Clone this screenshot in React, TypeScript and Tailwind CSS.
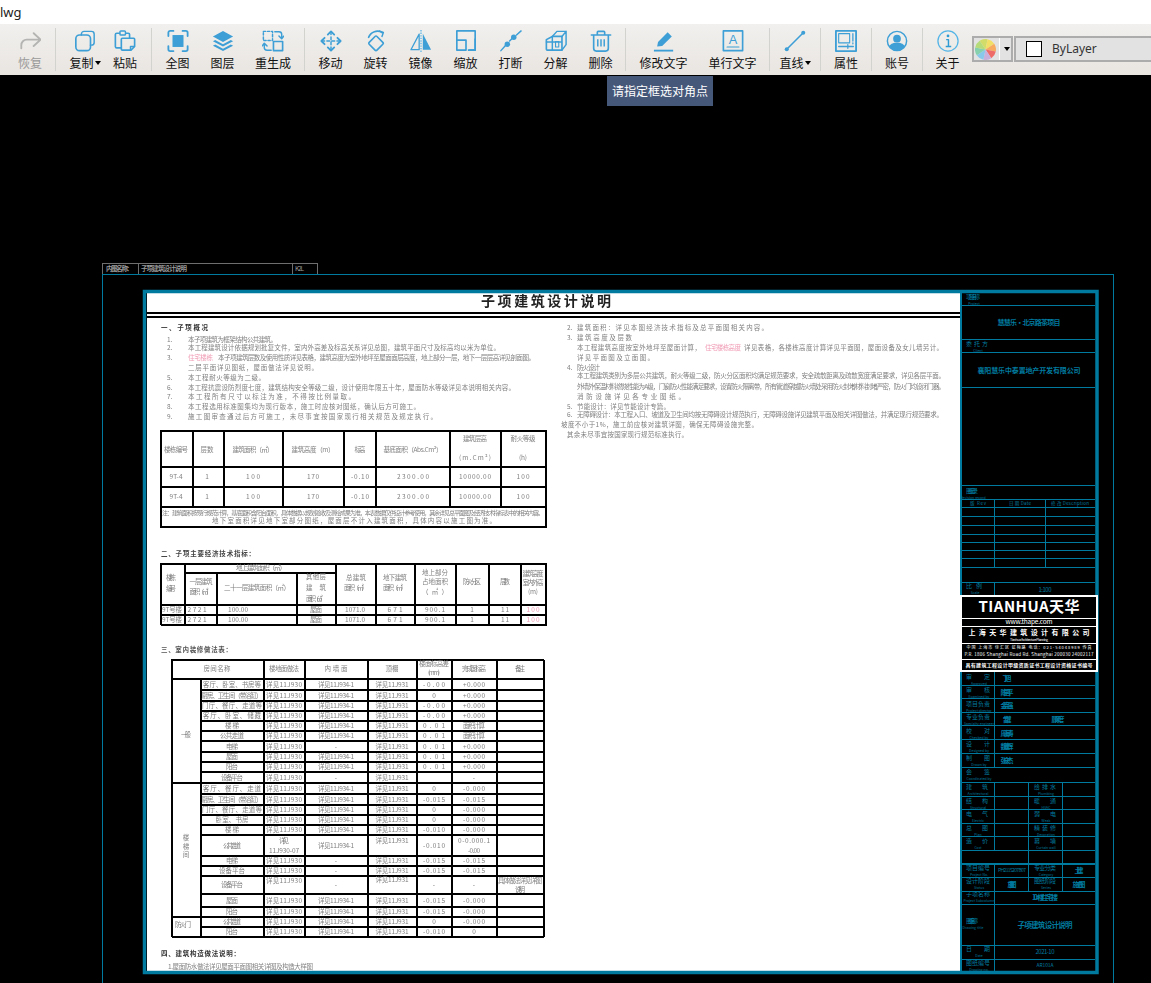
import React from "react";

const B = "#3d9fd6";

function Ic({ children, w = 24 }: { children: React.ReactNode; w?: number }) {
  return (
    <svg width={22} height={22} viewBox={`0 0 ${w} 24`} fill="none" stroke={B} strokeWidth={1.6} strokeLinecap="round" strokeLinejoin="round">
      {children}
    </svg>
  );
}

const icons: Record<string, React.ReactNode> = {
  redo: (
    <Ic><path d="M2.5 20v-3.500a6 6 0 0 1 6-6H23M16 3.500l7.500 7-7.500 7" stroke="#b4b4b2" strokeWidth={2} /></Ic>
  ),
  copy: (
    <Ic><path d="M8 5.500V4.500a3 3 0 0 1 3-3h8a3 3 0 0 1 3 3v9a3 3 0 0 1-3 3h-1" /><rect x="2" y="5.500" width="16" height="17" rx="4" strokeWidth={1.8} /></Ic>
  ),
  paste: (
    <Ic><path d="M6 3.500H3a1.500 1.500 0 0 0-1.500 1.500v13A1.500 1.500 0 0 0 3 19.500h5M17 9V5a1.500 1.500 0 0 0-1.500-1.500H13" strokeWidth={1.8} /><rect x="6.500" y="1" width="6" height="4.500" rx="1" /><path d="M9 9h12.500a1 1 0 0 1 1 1v8l-4 4H9a1 1 0 0 1-1-1V10a1 1 0 0 1 1-1z" strokeWidth={1.8} /><path d="M22 18h-4v4" /></Ic>
  ),
  fit: (
    <Ic><path d="M1.500 6.500V3a2 2 0 0 1 2-2h3.500M17 1h3.500a2 2 0 0 1 2 2v3.500M22.500 17.500V21a2 2 0 0 1-2 2H17M7 23H3.500a2 2 0 0 1-2-2v-3.500" strokeWidth={2} /><rect x="6" y="5.500" width="12" height="13" fill={B} stroke="none" /></Ic>
  ),
  layers: (
    <Ic>
      <path d="M12 1L23 7l-11 6L1 7z" fill={B} stroke="none" />
      <path d="M3.500 10.800L12 15.500l8.500-4.700L23 12.200 12 18 1 12.200z" fill={B} stroke="none" />
      <path d="M3.500 15.800L12 20.500l8.500-4.700L23 17.200 12 23 1 17.200z" fill={B} stroke="none" />
    </Ic>
  ),
  regen: (
    <Ic w={24}>
      <rect x="1.500" y="1.500" width="10" height="10" strokeDasharray="2.500 2" />
      <rect x="12.500" y="12.500" width="10" height="10" strokeWidth={1.8} />
      <path d="M14 2h4.500a3 3 0 0 1 3 3v4M18.500 6.500l3 3 2.500-3M10 22H5.500a3 3 0 0 1-3-3v-4M0 17.500l2.500-3 3 3" />
    </Ic>
  ),
  move: (
    <Ic>
      <path d="M12 2v20M2 12h20" strokeDasharray="3 2.500" />
      <path d="M8.500 5L12 1.500 15.500 5M8.500 19l3.500 3.500 3.500-3.500M5 8.500L1.500 12 5 15.500M19 8.500l3.500 3.500-3.500 3.500" strokeWidth={2} />
    </Ic>
  ),
  rotate: (
    <Ic>
      <rect x="6" y="8.500" width="12" height="12" rx="1.500" transform="rotate(45 12 14.500)" strokeWidth={1.8} />
      <path d="M4 8a10 10 0 0 1 15-5" strokeWidth={1.8} />
      <path d="M15.500 1l4.500 1.700-1.500 4.300" strokeWidth={1.6} />
    </Ic>
  ),
  mirror: (
    <Ic>
      <path d="M10 4.500v17H1z" strokeWidth={1.4} />
      <path d="M14 4v17.500h9z" fill={B} stroke="none" />
      <path d="M12 0v24" strokeDasharray="1.500 1.300" stroke="#88c6e8" strokeWidth={2} strokeLinecap="butt" />
    </Ic>
  ),
  scale: (
    <Ic>
      <path d="M2 11V1h20v21H14" strokeWidth={1.8} strokeLinecap="butt" />
      <rect x="2" y="11" width="10" height="11" strokeWidth={1.8} />
      <path d="M16 22h6V10" strokeWidth={1.8} />
    </Ic>
  ),
  break: (
    <Ic>
      <path d="M23 1l-5 4.500M13.500 9l-3 3M6 17l-5 5.500" strokeWidth={1.6} />
      <circle cx="15" cy="8" r="3" fill={B} stroke="none" />
      <circle cx="8" cy="15.500" r="3" fill={B} stroke="none" />
    </Ic>
  ),
  explode: (
    <Ic>
      <path d="M1.500 10.500L8 7h10.500v15H2.500a1 1 0 0 1-1-1z" strokeWidth={1.8} />
      <path d="M8 7l5-5.500h10V16l-4.500 6M18.500 7L23 1.500M8 7v15M1.500 13H18" strokeWidth={1.6} />
      <path d="M11.500 12.500h3.500v6h-3.500z" strokeWidth={1.2} />
    </Ic>
  ),
  trash: (
    <Ic>
      <path d="M1.500 5.500h21M8 5V2.500a1 1 0 0 1 1-1h6a1 1 0 0 1 1 1V5" strokeWidth={1.8} />
      <path d="M4 6v14a3 3 0 0 0 3 3h10a3 3 0 0 0 3-3V6" strokeWidth={1.8} />
      <path d="M8.500 10v8M12 10v8M15.500 10v8" strokeWidth={1.6} strokeLinecap="butt" />
    </Ic>
  ),
  pencil: (
    <Ic>
      <path d="M4.500 18l1-5L16 2.500 20.500 7 10 17.500z" fill={B} stroke="none" />
      <path d="M1 22.500h21" strokeWidth={2} strokeLinecap="butt" />
    </Ic>
  ),
  text: (
    <Ic>
      <rect x="1.500" y="1" width="21" height="21.500" strokeWidth={1.8} />
      <text x="12" y="15" textAnchor="middle" fontSize="14" fill={B} stroke="none" className="font-['Liberation_Sans',sans-serif]">A</text>
      <path d="M5.500 18.500h13" strokeWidth={1.2} />
    </Ic>
  ),
  line: (
    <Ic>
      <path d="M3 21L21 3" strokeWidth={1.8} />
      <circle cx="3" cy="21" r="2.200" fill={B} stroke="none" />
      <circle cx="21" cy="3" r="2.200" fill={B} stroke="none" />
    </Ic>
  ),
  props: (
    <Ic>
      <rect x="1" y="1" width="22" height="22" strokeWidth={2} strokeLinecap="butt" />
      <rect x="4" y="4" width="12" height="10" strokeWidth={1.2} />
      <path d="M19.500 4v8M4 18h16M19.500 14v1M14 16v4" strokeWidth={1.4} />
    </Ic>
  ),
  user: (
    <Ic>
      <circle cx="12" cy="12" r="10.500" strokeWidth={1.6} />
      <circle cx="12" cy="9.500" r="4.200" fill={B} stroke="none" />
      <path d="M3.500 18c2-3.500 5-4 8.500-4s6.500.5 8.500 4A10.500 10.500 0 0 1 12 22.500 10.500 10.500 0 0 1 3.500 18z" fill={B} stroke="none" />
    </Ic>
  ),
  info: (
    <Ic>
      <circle cx="12" cy="12" r="11" stroke="#55b5e6" strokeWidth={1.4} />
      <circle cx="12" cy="6.500" r="1.500" fill="#2f9bd3" stroke="none" />
      <path d="M10 10.500h2.500v7M9.500 18h6" stroke="#2f9bd3" strokeWidth={1.6} strokeLinecap="butt" />
    </Ic>
  ),
};

function Tool({ icon, label, w, dim, caret }: { icon: string; label: string; w: string; dim?: boolean; caret?: boolean }) {
  return (
    <div className={`${w} flex flex-col items-center shrink-0`}>
      <div className="h-[22px] flex items-center justify-center mt-[6px]">{icons[icon]}</div>
      <div className={`mt-[2px] h-[18px] flex items-center text-[12px] leading-[18px] whitespace-nowrap ${dim ? "text-[#9a9a9a]" : "text-[#111]"}`}>
        {label}
        {caret && <span className="ml-px w-0 h-0 border-x-[3.5px] border-x-transparent border-t-[4px] border-t-black" />}
      </div>
    </div>
  );
}

function Sep() {
  return <div className="w-px h-[43px] mt-[4px] bg-[#d2d2cf] shrink-0" />;
}

function Pie() {
  const cols = ["#d2dc68", "#f2df66", "#f7ab5e", "#ee6a68", "#c8afdc", "#88c8ea", "#86d0ae", "#b5dc78"];
  const r = 10.5;
  const c = 10.5;
  return (
    <svg width="21" height="21" viewBox="0 0 21 21">
      {cols.map((col, i) => {
        const a0 = ((i - 1) * Math.PI) / 4 - Math.PI / 2 + 0.2;
        const a1 = (i * Math.PI) / 4 - Math.PI / 2 + 0.2;
        return (
          <path
            key={i}
            fill={col}
            d={`M${c} ${c}L${c + r * Math.cos(a0)} ${c + r * Math.sin(a0)}A${r} ${r} 0 0 1 ${c + r * Math.cos(a1)} ${c + r * Math.sin(a1)}Z`}
          />
        );
      })}
    </svg>
  );
}

const TEAL = "#007a9f";
const INK = "#808080";

function T({ x, y, w, s, fs = 6.5, fill = INK, anchor = "start", bold, soft }: { x: number; y: number; w?: number; s: string; fs?: number; fill?: string; anchor?: "start" | "middle"; bold?: boolean; soft?: boolean }) {
  const isSoft = soft ?? (fill !== TEAL && fill !== "#fff");
  return (
    <text
      x={x}
      y={y + fs * 0.36}
      fontSize={fs}
      fill={fill}
      textAnchor={anchor}
      fontWeight={bold ? 700 : 400}
      textLength={w}
      lengthAdjust={w ? "spacing" : undefined}
      className={isSoft ? "blur-[0.35px]" : undefined}
    >
      {s}
    </text>
  );
}
const C = (x: number, y: number, w: number, s: string, fill?: string) => <T key={`${x}-${y}-${s}`} x={x} y={y} w={w} s={s} anchor="middle" fill={fill} />;

function Lines({ h = [], v = [], color = "#000", sw = 2 }: { h?: number[][]; v?: number[][]; color?: string; sw?: number }) {
  return (
    <g stroke={color} strokeWidth={sw} shapeRendering="crispEdges">
      {h.map(([y, a, b], i) => <line key={`h${i}`} x1={a} x2={b} y1={y} y2={y} />)}
      {v.map(([x, a, b], i) => <line key={`v${i}`} x1={x} x2={x} y1={a} y2={b} />)}
    </g>
  );
}

const notes: [number, number, number, string][] = [
  [340, 188, 277, "本子项建筑为框架结构公共建筑。"],
  [348, 188, 500, "本工程建筑设计依据规划批复文件，室内外高差及标高关系详见总图，建筑平面尺寸及标高均以米为单位。"],
  [368, 188, 318, "二层平面详见图纸，屋面做法详见说明。"],
  [378, 188, 265, "本工程耐火等级为二级。"],
  [388, 188, 515, "本工程抗震设防烈度七度，建筑结构安全等级二级，设计使用年限五十年，屋面防水等级详见本说明相关内容。"],
  [397, 188, 355, "本工程所有尺寸以标注为准，不得按比例量取。"],
  [407, 188, 420, "本工程选用标准图集均为现行版本，施工时应核对图纸，确认后方可施工。"],
  [417, 188, 437, "施工图审查通过后方可施工，未尽事宜按国家现行相关规范及规定执行。"],
];

const rightNotes: [number, number, number, string, string?][] = [
  [328, 577, 768, "建筑面积：详见本图经济技术指标及总平面图相关内容。"],
  [338, 577, 632, "建筑高度及层数"],
  [358, 577, 654, "详见平面图及立面图。"],
  [368, 577, 600, "防火设计"],
  [376, 577, 945, "本工程建筑类别为多层公共建筑，耐火等级二级，防火分区面积均满足规范要求，安全疏散距离及疏散宽度满足要求，详见各层平面。"],
  [387, 577, 945, "外墙外保温材料燃烧性能为A级，门窗防火性能满足要求，设置防火隔离带，所有管道穿越防火墙处采用防火封堵材料封堵严密，防火门均设闭门器。"],
  [397, 577, 685, "消防设施详见各专业图纸。"],
  [407, 577, 670, "节能设计：详见节能设计专篇。"],
  [415, 577, 943, "无障碍设计：本工程入口、坡道及卫生间均按无障碍设计规范执行，无障碍设施详见建筑平面及相关详图做法，并满足现行规范要求。"],
  [425, 561, 758, "坡度不小于1%，施工前应核对建筑详图，确保无障碍设施完整。"],
  [435, 567, 688, "其余未尽事宜按国家现行规范标准执行。"],
];

const t3Y = [679, 690, 701, 711, 721, 731, 741, 752, 762, 772, 783, 794, 805, 815, 825, 835, 856, 866, 876, 894, 907, 917, 927, 937];
const t3Rows: [string, number, string, string, string][] = [
  ["客厅、卧室、书房等", 58, "1", "-0.00", "+0.000"],
  ["厨房、卫生间（带浴缸）", 61, "1", "0", "+0.000"],
  ["门厅、餐厅、走道等", 60, "1", "-0.00", "+0.000"],
  ["客厅、卧室、储藏", 58, "1", "-0.00", "+0.000"],
  ["楼梯", 14, "1", "0.01", "面积计算"],
  ["公共走道", 24, "1", "0.01", "面积计算"],
  ["电梯", 12, "-", "0.01", "+0.000"],
  ["屋面", 12, "1", "0.01", "+0.000"],
  ["阳台", 12, "1", "0.01", "+0.000"],
  ["设备平台", 22, "-", "", "-"],
  ["客厅、餐厅、走道", 58, "1", "0", "-0.000"],
  ["厨房、卫生间（带浴缸）", 61, "1", "-0.015", "-0.015"],
  ["门厅、餐厅、走道等", 60, "1", "0", "-0.000"],
  ["卧室、书房", 33, "1", "0", "-0.000"],
  ["楼梯", 14, "1", "-0.010", "-0.000"],
  ["公共走道", 18, "1", "-0.010", "-0.015"],
  ["电梯", 12, "-", "-0.015", "-0.015"],
  ["设备平台", 26, "-", "-0.015", "-0.015"],
  ["设备平台", 22, "-", "-", "-"],
  ["屋面", 12, "1", "-0.015", "-0.000"],
  ["阳台", 12, "1", "-0.015", "-0.000"],
  ["公共走道", 18, "1", "0", "-0.000"],
  ["阳台", 12, "1", "-0.010", "0"],
];

function Page() {
  return (
    <g>
      <rect x="147" y="293" width="814" height="679" fill="#fff" />
      <text x="546" y="306" fontSize="14" fontWeight={700} textAnchor="middle" fill="#222" textLength={130} lengthAdjust="spacing" className="blur-[0.35px]">子项建筑设计说明</text>
      <Lines h={[[313, 147, 960], [317, 147, 960]]} sw={2} />

      <T x={161} y={328} w={47} s="一、子项概况" fill="#333" bold />
      {notes.map(([y, a, b, s], i) => (
        <g key={i}>
          {i !== 2 && <T x={167} y={y} s={`${i < 2 ? i + 1 : i + 2}.`} />}
          <T x={a} y={y} w={b - a} s={s} />
        </g>
      ))}
      <T x={167} y={358} s="3." />
      <T x={188} y={358} w={25} s="住宅楼栋" fill="#f09ab4" />
      <T x={218} y={358} w={317} s="本子项建筑层数及使用性质详见表格，建筑高度为室外地坪至屋面面层高度，地上部分一层，地下一层层高详见剖面图。" />

      {/* table 1 */}
      <Lines
        h={[[431, 160, 547], [467, 160, 547], [487, 160, 547], [507, 160, 547], [527, 160, 547]]}
        v={[[161, 431, 527], [193, 431, 507], [224, 431, 507], [283, 431, 507], [344, 431, 507], [376, 431, 507], [450, 431, 507], [501, 431, 507], [546, 431, 527]]}
      />
      {C(176, 450, 24, "楼栋编号")}
      {C(207, 450, 13, "层数")}
      {C(253, 450, 41, "建筑面积（㎡）")}
      {C(313, 450, 43, "建筑高度（m）")}
      {C(360, 450, 11, "标高")}
      {C(413, 450, 59, "基底面积（Abs.Cm²）")}
      {C(475, 439, 24, "建筑层高")}
      {C(475, 458, 32, "(m.Cm²)")}
      {C(523, 439, 25, "耐火等级")}
      {C(523, 458, 8, "(h)")}
      {[477, 497].map((y) => (
        <g key={y}>
          {C(176, y, 13, "9T-4")}
          {C(207, y, 3, "1")}
          {C(253, y, 14, "100")}
          {C(313, y, 12, "170")}
          {C(360, y, 18, "-0.10")}
          {C(413, y, 32, "2300.00")}
          {C(475, y, 32, "10000.00")}
          {C(523, y, 13, "100")}
        </g>
      ))}
      <T x={162} y={513} w={382} s="注：建筑面积按现行规范计算，基底面积含阳台面积，具体数据以规划验收及测绘成果为准，本表数据仅供设计参考使用，其余详见总平面图及经济技术指标表中的相关内容。" fs={6} />
      <T x={212} y={521} w={284} s="地下室面积详见地下室部分图纸，屋面层不计入建筑面积，具体内容以施工图为准。" />

      {/* table 2 */}
      <T x={161} y={554} w={94} s="二、子项主要经济技术指标：" fill="#444" bold />
      <Lines
        h={[[564, 160, 547], [573, 185, 336], [605, 160, 547], [615, 160, 547], [625, 161, 547]]}
        v={[[161, 564, 625], [185, 564, 625], [217, 573, 625], [297, 573, 625], [336, 564, 625], [376, 564, 625], [415, 564, 625], [456, 564, 625], [489, 564, 625], [521, 564, 625], [546, 564, 625]]}
      />
      {C(171, 578, 10, "楼栋")}
      {C(171, 589, 10, "编号")}
      {C(261, 568, 50, "地上建筑面积（㎡）")}
      {C(201, 582, 23, "一层建筑")}
      {C(201, 592, 23, "面积（㎡）")}
      {C(257, 588, 66, "二十一层建筑面积（㎡）")}
      {C(316, 577, 20, "其他层")}
      {C(316, 588, 20, "建筑")}
      {C(316, 599, 20, "面积（㎡）")}
      {C(356, 578, 20, "总建筑")}
      {C(356, 588, 24, "面积（㎡）")}
      {C(395, 578, 24, "地下建筑")}
      {C(395, 588, 24, "面积（㎡）")}
      {C(435, 573, 26, "地上部分")}
      {C(435, 582, 26, "占地面积")}
      {C(435, 592, 26, "（㎡）")}
      {C(472, 582, 18, "防火分区")}
      {C(505, 582, 10, "层数")}
      {C(533, 574, 21, "建筑高度")}
      {C(533, 583, 21, "室内外高")}
      {C(533, 592, 10, "(m)")}
      {[610, 620].map((y) => (
        <g key={y}>
          {C(172, y, 20, "9T号楼")}
          {C(197, y, 19, "2721")}
          {C(238, y, 20, "100.00")}
          {C(316, y, 12, "屋面")}
          {C(355, y, 20, "1071.0")}
          {C(395, y, 15, "671")}
          {C(435, y, 20, "900.1")}
          {C(472, y, 3, "1")}
          {C(505, y, 8, "11")}
          {C(533, y, 13, "100", "#f09ab4")}
        </g>
      ))}

      {/* table 3 */}
      <T x={161} y={650} w={71} s="三、室内装修做法表：" fill="#555" bold />
      <Lines
        h={[[660, 171, 544], [679, 171, 544], [783, 171, 544], [917, 171, 544], [937, 172, 544], ...t3Y.filter((y) => ![679, 783, 917, 937].includes(y)).map((y) => [y, 201, 544])]}
        v={[[172, 660, 937], [201, 679, 937], [264, 660, 937], [305, 660, 937], [368, 660, 937], [417, 660, 937], [452, 660, 937], [497, 660, 937], [544, 660, 937]]}
      />
      {C(217, 669, 27, "房间名称")}
      {C(284, 669, 30, "楼地面做法")}
      {C(336, 669, 23, "内墙面")}
      {C(392, 669, 13, "顶棚")}
      {C(434, 664, 30, "楼面标高差")}
      {C(434, 673, 12, "(mm)")}
      {C(474, 669, 24, "完成面标高")}
      {C(520, 669, 10, "备注")}
      {C(186, 735, 10, "一般")}
      {C(186, 838, 6, "楼")}
      {C(186, 847, 6, "梯")}
      {C(186, 855, 6, "间")}
      {C(183, 925, 16, "防火门")}
      {t3Rows.map(([name, w, wall, d1, d2], i) => {
        const y = (t3Y[i] + t3Y[i + 1]) / 2;
        const tall = i === 15;
        const note = i === 18;
        return (
          <g key={i}>
            {C(232, y, w, name)}
            {tall ? (
              <>
                {C(284, y - 5, 10, "详见")}
                {C(284, y + 5, 30, "11J930-07")}
              </>
            ) : (
              C(284, note ? y - 4 : y, 36, "详见11J930")
            )}
            {C(336, y, wall === "-" ? 3 : 36, wall === "-" ? "-" : "详见11J934-1")}
            {C(392, tall || note ? y - 5 : y, 33, "详见11J931")}
            {d1 && C(434, y, d1 === "-" || d1 === "0" || d1 === "1" ? 3 : 22, d1)}
            {tall ? (
              <>
                {C(474, y - 5, 32, "0-0.000.1")}
                {C(474, y + 5, 12, "-0.00")}
              </>
            ) : (
              C(474, y, d2 === "-" || d2 === "0" ? 3 : 22, d2)
            )}
            {note && (
              <>
                {C(520, y - 4, 44, "具体做法详见详图")}
                {C(520, y + 5, 10, "说明")}
              </>
            )}
          </g>
        );
      })}

      <T x={161} y={954} w={79} s="四、建筑构造做法说明：" fill="#333" bold />
      <T x={168} y={967} w={145} s="1.屋面防水做法详见屋面平面图相关详图及构造大样图" />

      {rightNotes.map(([y, a, b, s], i) => (
        <T key={i} x={a} y={y} w={b - a} s={s} />
      ))}
      <T x={567} y={328} s="2." />
      <T x={567} y={338} s="3." />
      <T x={567} y={368} s="4." />
      <T x={567} y={407} s="5." />
      <T x={567} y={415} s="6." />
      <T x={577} y={348} w={124} s="本工程建筑高度按室外地坪至屋面计算，" />
      <T x={705} y={348} w={36} s="住宅楼栋高度" fill="#f09ab4" />
      <T x={744} y={348} w={199} s="详见表格，各楼栋高度计算详见平面图，屋面设备及女儿墙另计。" />
    </g>
  );
}

const TL = (x: number, y: number, w: number, s: string, fs = 7, bold = true) => (
  <T key={`${x}-${y}-${s}`} x={x} y={y} w={w} s={s} fs={fs} fill={TEAL} anchor="middle" bold={bold} />
);

function Lab({ y, s, en, x2 = 992, x1 = 966 }: { y: number; s: string; en: string; x1?: number; x2?: number }) {
  return (
    <g>
      <T x={x1} y={y} w={x2 - x1 - 2} s={s} fs={6} fill={TEAL} />
      <T x={(x1 + x2) / 2} y={y + 6.500} s={en} fs={3.500} fill={TEAL} anchor="middle" />
    </g>
  );
}

function TitleBlock() {
  return (
    <g>
      <Lines
        color={TEAL}
        sw={1}
        h={[
          ...[305, 339, 352, 387, 485, 499, 507, 516, 525, 534, 542, 550, 558, 567, 582].map((y) => [y + 0.5, 962, 1095]),
          ...[685, 698, 712, 725, 739, 753, 767, 782, 796, 809, 823, 836, 850, 877, 891, 904, 945, 959].map((y) => [y + 0.5, 962, 1095]),
        ]}
        v={[
          [994.5, 499, 567],
          [1045.5, 499, 567],
          [994.5, 582, 596],
          [994.5, 672, 767],
          [994.5, 782, 850],
          [1028.5, 782, 891],
          [1062.5, 782, 891],
          [994.5, 863, 971],
        ]}
      />
      <Lines color={TEAL} sw={2} h={[[863.5, 962, 1095]]} v={[[961, 293, 971]]} />
      <rect x="144.500" y="291.500" width="952.500" height="681" fill="none" stroke={TEAL} strokeWidth={3.500} />

      <Lab y={297} s="项目名称" en="Project" x1={966} x2={982} />
      {TL(1029, 322, 63, "慧慧乐·北京路茶项目")}
      <Lab y={344} s="委托方" en="Client" x1={966} x2={990} />
      {TL(1029, 370, 103, "襄阳慧乐中泰置地产开发有限公司")}
      <Lab y={491} s="图纸记录" en="Revision record" x1={966} x2={980} />
      {TL(978, 503, 16, "版 Rev", 4.500, false)}
      {TL(1020, 503, 22, "日 期 Date", 4.500, false)}
      {TL(1070, 503, 38, "修 改 Description", 4.500, false)}
      <Lab y={586} s="比例" en="Scale" x1={966} x2={984} />
      {TL(1045, 590, 13, "1:100", 6, false)}

      <rect x="961" y="596" width="136" height="76" fill="#000" />
      <Lines
        color="#fff"
        sw={1}
        h={[[618.5, 961, 1096], [626.5, 961, 1096], [643.5, 961, 1096], [659.5, 961, 1096], [670.5, 961, 1096]]}
      />
      <Lines color="#fff" sw={2} h={[[596, 960, 1097], [671, 960, 1097]]} v={[[1097, 595, 672], [961, 595, 672]]} />
      <text x="1029" y="612" fontSize="15" fontWeight={700} fill="#fff" textAnchor="middle" textLength={101} lengthAdjust="spacing">TIANHUA天华</text>
      <T x={1029} y={622} w={47} s="www.thape.com" fs={6.500} fill="#fff" anchor="middle" />
      <T x={1029} y={632} w={121} s="上海天华建筑设计有限公司" fs={7} fill="#fff" anchor="middle" bold />
      <T x={1029} y={640} w={38} s="Tianhua Architecture Planning" fs={3.500} fill="#fff" anchor="middle" />
      <T x={1029} y={648} w={125} s="中国 上海市 徐汇区 虹梅路 电话：021-54048989 传真" fs={4} fill="#fff" anchor="middle" />
      <T x={1029} y={654} w={129} s="P.R. 1806 Shanghai Road Rd. Shanghai 200030 24002117" fs={4.500} fill="#fff" anchor="middle" />
      <T x={1029} y={665} w={127} s="具有建筑工程设计甲级资质证书工程设计资格证书编号" fs={5} fill="#fff" anchor="middle" bold />

      <Lab y={677} s="审定" en="Approved" />
      {TL(1007, 678, 9, "丁旭")}
      <Lab y={690} s="审核" en="Examined by" />
      {TL(1007, 692, 13, "陈国平")}
      <Lab y={704} s="项目负责" en="Project director" />
      {TL(1007, 705, 13, "金克强")}
      <Lab y={717} s="专业负责" en="Specialty engineer" />
      {TL(1007, 719, 9, "曾健")}
      {TL(1058, 719, 13, "顾风度")}
      <Lab y={731} s="校对" en="Checked by" />
      {TL(1007, 733, 13, "周海涛")}
      <Lab y={744} s="设计" en="Designed by" />
      {TL(1007, 746, 13, "魏建辉")}
      <Lab y={758} s="制图" en="Drawn by" />
      {TL(1007, 760, 13, "张庆杰")}
      <Lab y={772} s="会签" en="Coordinated by" />
      {[
        ["建筑", "Architectural", "给排水", "Plumbing", 787],
        ["结构", "Structural", "暖通", "HVAC", 801],
        ["电气", "Electric", "弱电", "Weak", 814],
        ["总图", "Plan", "精装修", "Decoration", 828],
        ["造价", "Cost", "幕墙", "Curtain wall", 841],
      ].map(([a, ae, b, be, y]) => (
        <g key={y as number}>
          <Lab y={y as number} s={a as string} en={ae as string} x1={966} x2={990} />
          <Lab y={y as number} s={b as string} en={be as string} x1={1034} x2={1058} />
        </g>
      ))}
      <Lab y={868} s="项目编号" en="Project No." />
      {TL(1012, 870, 28, "PH2115207B07", 5, false)}
      <Lab y={868} s="专业分类" en="Category" x1={1034} x2={1058} />
      {TL(1079, 870, 9, "土建")}
      <Lab y={881} s="设计阶段" en="Status" />
      {TL(1012, 884, 9, "施工图")}
      <Lab y={881} s="图纸阶段" en="Series" x1={1034} x2={1058} />
      {TL(1079, 884, 13, "施工图")}
      <Lab y={894} s="子项名称" en="Project Subcolumn" />
      {TL(1045, 897, 26, "10#楼 住宅楼")}
      <Lab y={921} s="图纸名称" en="Drawing title" x1={966} x2={980} />
      {TL(1045, 925, 55, "子项建筑设计说明", 7.500)}
      <Lab y={949} s="日期" en="Date" />
      {TL(1045, 952, 19, "2021-10", 6, false)}
      <Lab y={963} s="图纸编号" en="Drawing no." />
      {TL(1045, 965, 17, "AR101A", 5, false)}
    </g>
  );
}

function Drawing() {
  return (
    <svg className="block w-full h-full" viewBox="0 75 1151 908" preserveAspectRatio="xMinYMin slice">
      <g fill="none" stroke={TEAL} strokeWidth={1} shapeRendering="crispEdges">
        <path d="M102.500 990V274.500H1113.500V990" />
      </g>
      <g fill="none" stroke="#6e6e6e" strokeWidth={1} shapeRendering="crispEdges">
        <path d="M102.500 274V263.500H317.500V274M138.500 263.500V274M292.500 263.500V274" />
      </g>
      <T x={106} y={268.500} w={27} s="内图名称：" fill="#9a9a9a" fs={6.500} bold soft={false} />
      <T x={141} y={268.500} w={46} s="子项建筑设计说明" fill="#9a9a9a" fs={6.500} bold soft={false} />
      <T x={295} y={268.500} w={9} s="K2L" fill="#9a9a9a" fs={6.500} soft={false} />
      <Page />
      <TitleBlock />
    </svg>
  );
}

export default function App() {
  return (
    <div className="w-[1151px] h-[983px] overflow-hidden flex flex-col bg-black font-['Noto_Sans_CJK_SC','Noto_Sans',sans-serif]">
      <div className="h-[24px] bg-white text-[13px] leading-[24px] text-[#222] font-['Noto_Sans',sans-serif]">lwg</div>
      <div className="relative h-[51px] flex bg-gradient-to-b from-[#f1f0ee] to-[#e9e5e1] shrink-0">
        <div className="w-[55px] pl-[5px] flex shrink-0"><Tool icon="redo" label="恢复" w="w-[50px]" dim /></div>
        <Sep />
        <div className="w-[95px] pl-[9px] flex shrink-0">
          <Tool icon="copy" label="复制" w="w-[40px]" caret />
          <Tool icon="paste" label="粘贴" w="w-[40px]" />
        </div>
        <Sep />
        <div className="w-[152px] pl-[3px] flex shrink-0">
          <Tool icon="fit" label="全图" w="w-[45px]" />
          <Tool icon="layers" label="图层" w="w-[45px]" />
          <Tool icon="regen" label="重生成" w="w-[56px]" />
        </div>
        <Sep />
        <div className="w-[320px] pl-[3px] flex shrink-0">
          <Tool icon="move" label="移动" w="w-[45px]" />
          <Tool icon="rotate" label="旋转" w="w-[45px]" />
          <Tool icon="mirror" label="镜像" w="w-[45px]" />
          <Tool icon="scale" label="缩放" w="w-[45px]" />
          <Tool icon="break" label="打断" w="w-[45px]" />
          <Tool icon="explode" label="分解" w="w-[45px]" />
          <Tool icon="trash" label="删除" w="w-[45px]" />
        </div>
        <Sep />
        <div className="w-[143px] pl-[3px] flex shrink-0">
          <Tool icon="pencil" label="修改文字" w="w-[69px]" />
          <Tool icon="text" label="单行文字" w="w-[69px]" />
        </div>
        <Sep />
        <div className="w-[50px] flex shrink-0"><Tool icon="line" label="直线" w="w-[50px]" caret /></div>
        <Sep />
        <div className="w-[50px] flex shrink-0"><Tool icon="props" label="属性" w="w-[50px]" /></div>
        <Sep />
        <div className="w-[50px] flex shrink-0"><Tool icon="user" label="账号" w="w-[50px]" /></div>
        <Sep />
        <div className="w-[49px] flex shrink-0"><Tool icon="info" label="关于" w="w-[49px]" /></div>
        <div className="mt-[12px] h-[26px] w-[41px] shrink-0 flex items-center border-2 border-[#acacac] bg-[#e2e2e2]">
          <span className="ml-px"><Pie /></span>
          <span className="ml-[3px] w-px h-[22px] bg-white" />
          <span className="ml-[4px] w-0 h-0 border-x-[3.5px] border-x-transparent border-t-[4px] border-t-black" />
        </div>
        <div className="ml-px mt-[12px] h-[26px] flex-1 flex items-center border-2 border-[#acacac] border-r-0 bg-[#e2e2e2]">
          <span className="ml-[10px] w-[16px] h-[16px] bg-white border border-black" />
          <span className="ml-[10px] text-[12px] text-[#333] font-['Noto_Sans',sans-serif]">ByLayer</span>
        </div>
        <div className="absolute left-[607px] top-[52px] w-[106px] h-[30px] bg-[#46587a] text-white text-[12px] flex items-center justify-center z-10">
          请指定框选对角点
        </div>
      </div>
      <div className="flex-1 min-h-0">
        <Drawing />
      </div>
    </div>
  );
}
